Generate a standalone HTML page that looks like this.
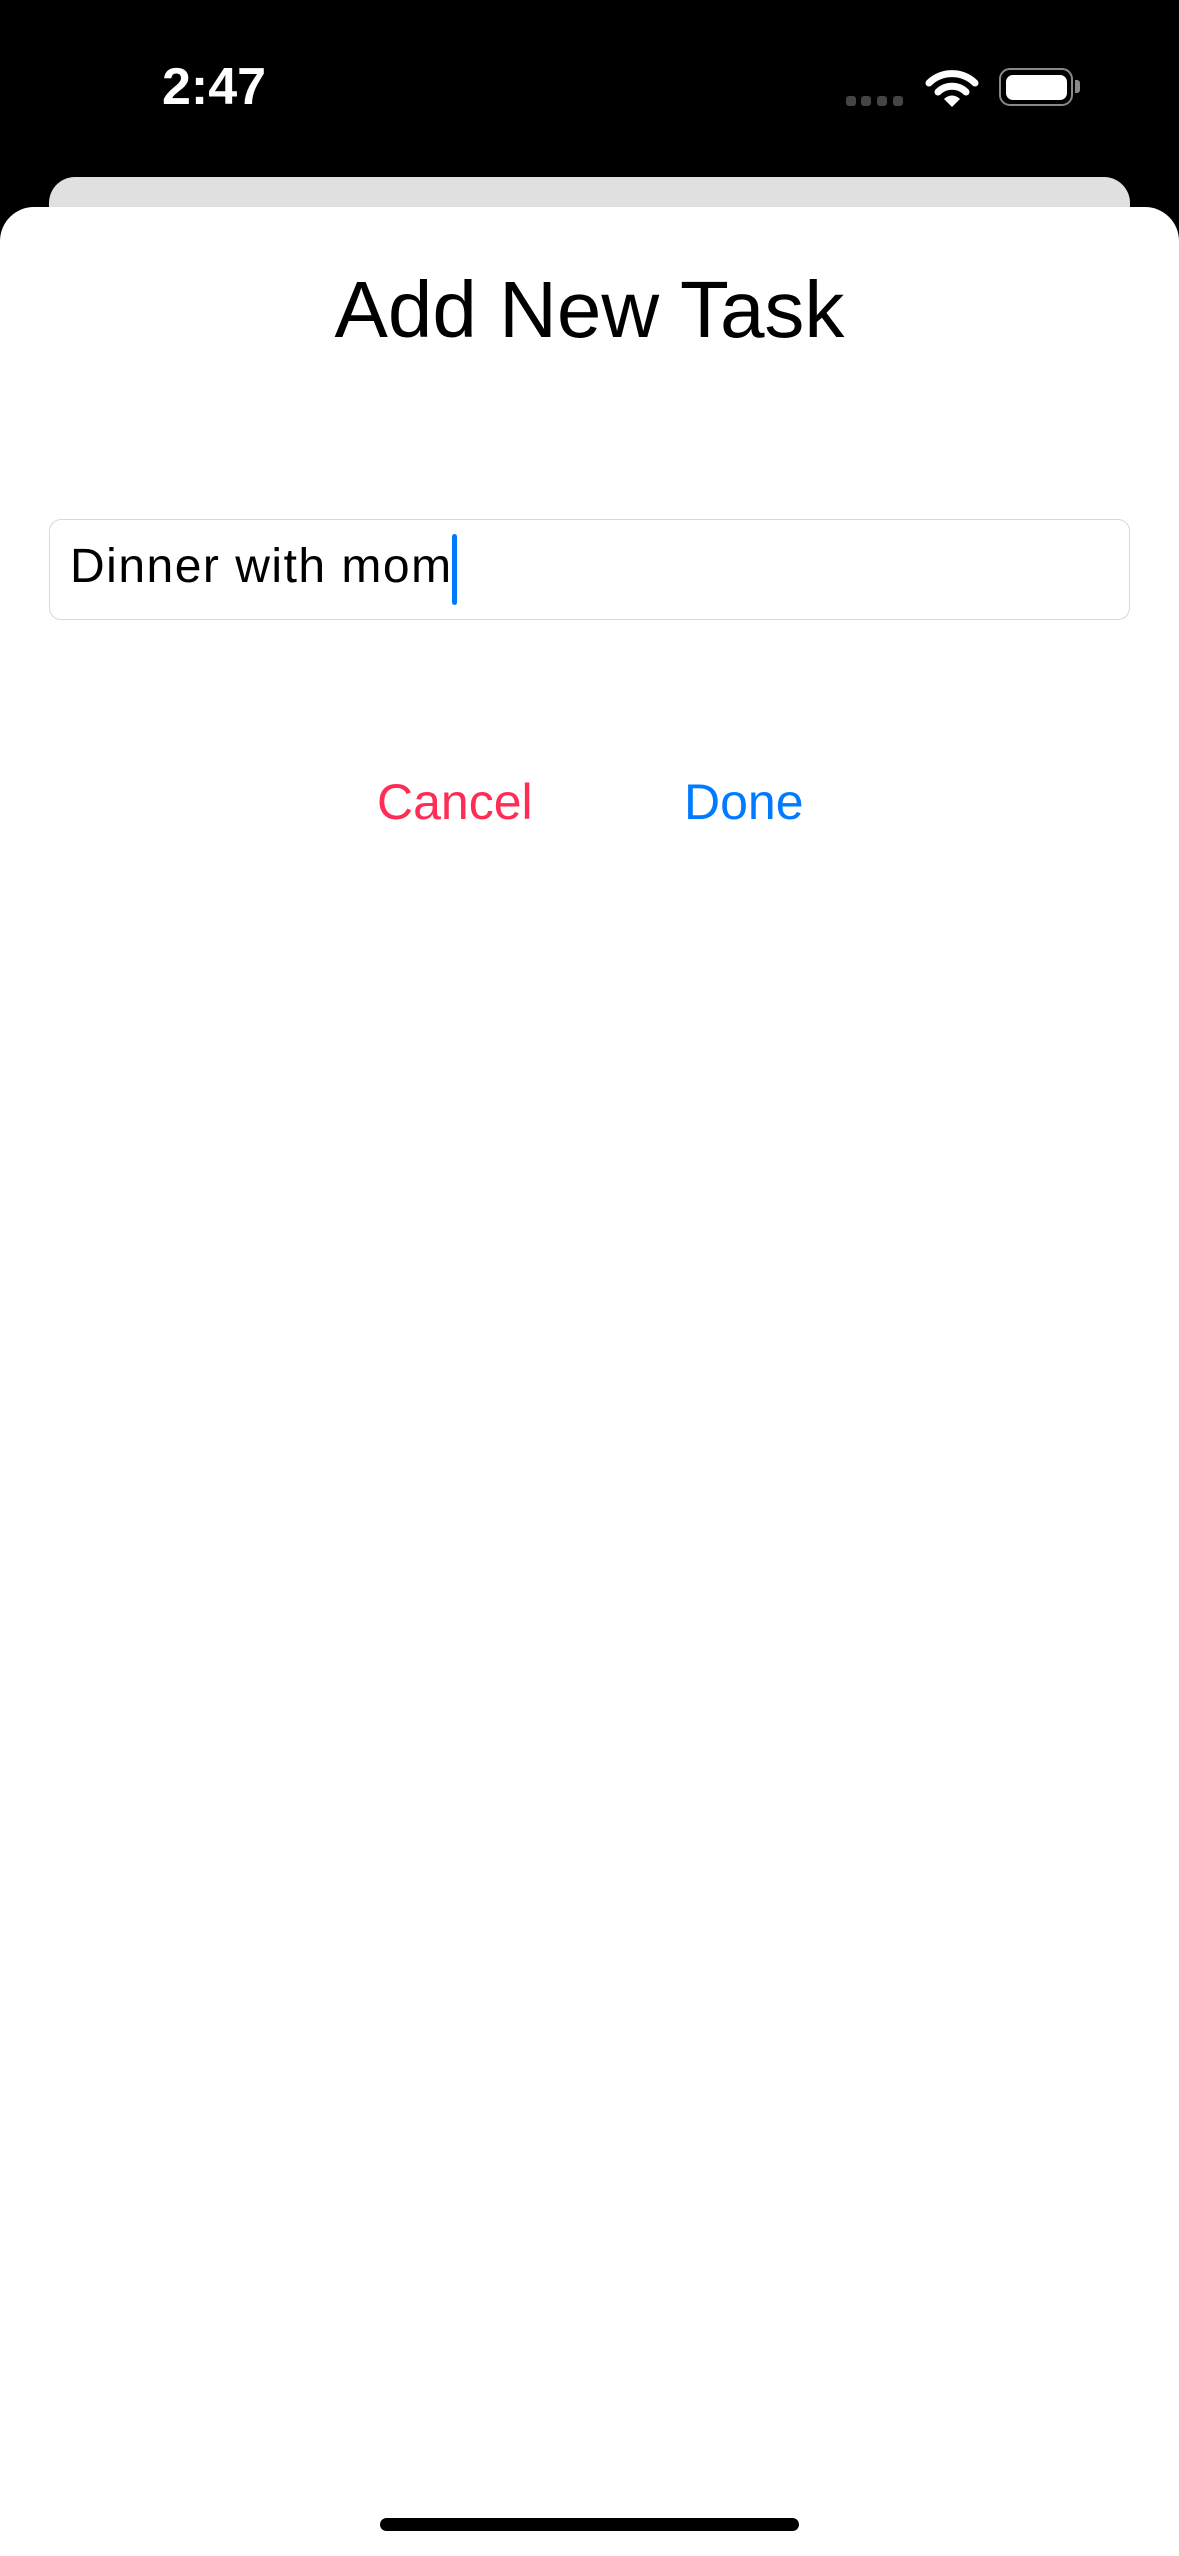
<!DOCTYPE html>
<html><head><meta charset="utf-8"><style>
html,body{margin:0;padding:0}
body{width:1179px;height:2556px;background:#000;position:relative;overflow:hidden;font-family:"Liberation Sans",sans-serif}
.abs{position:absolute}
</style></head><body>
<div class="abs" style="left:162px;top:55px;font-size:52px;font-weight:bold;color:#fff;line-height:64px;">2:47</div>
<div class="abs" style="left:846px;top:96px;width:10px;height:10px;border-radius:3px;background:#444"></div>
<div class="abs" style="left:861px;top:96px;width:10px;height:10px;border-radius:3px;background:#444"></div>
<div class="abs" style="left:877px;top:96px;width:10px;height:10px;border-radius:3px;background:#444"></div>
<div class="abs" style="left:893px;top:96px;width:10px;height:10px;border-radius:3px;background:#444"></div>
<svg class="abs" style="left:925px;top:66px" width="54" height="42" viewBox="0 0 54 42">
<path d="M4 17 A33 33 0 0 1 50 17" stroke="#fff" stroke-width="7" fill="none" stroke-linecap="round"/>
<path d="M13 26 A20 20 0 0 1 41 26" stroke="#fff" stroke-width="7" fill="none" stroke-linecap="round"/>
<path d="M19 33 L27 41 L35 33 A11 11 0 0 0 19 33 Z" fill="#fff"/>
</svg>
<div class="abs" style="left:999px;top:68px;width:70px;height:34px;border:2.5px solid #888;border-radius:11px;"></div>
<div class="abs" style="left:1006px;top:75px;width:61px;height:25px;background:#fff;border-radius:7px;"></div>
<div class="abs" style="left:1075px;top:80px;width:5px;height:13px;background:#888;border-radius:0 3px 3px 0"></div>
<div class="abs" style="left:49px;top:177px;width:1081px;height:60px;background:#e0e0e0;border-radius:26px 26px 0 0"></div>
<div class="abs" style="left:0;top:207px;width:1179px;height:2349px;background:#fff;border-radius:34px 34px 0 0"></div>
<div class="abs" style="left:0;top:262px;width:1179px;text-align:center;font-size:80px;line-height:96px;color:#000">Add New Task</div>
<div class="abs" style="left:49px;top:519px;width:1079px;height:99px;border:1.5px solid #d8d8d8;border-radius:12px;"></div>
<div class="abs" style="left:70px;top:538px;font-size:48px;line-height:58px;color:#000;letter-spacing:1.5px">Dinner with mom</div>
<div class="abs" style="left:452px;top:534px;width:5px;height:71px;background:#007aff;border-radius:3px"></div>
<div class="abs" style="left:377px;top:772px;font-size:50px;line-height:60px;color:#ff2d55">Cancel</div>
<div class="abs" style="left:684px;top:772px;font-size:50px;line-height:60px;color:#007aff">Done</div>
<div class="abs" style="left:380px;top:2518px;width:419px;height:13px;background:#000;border-radius:7px"></div>
</body></html>
